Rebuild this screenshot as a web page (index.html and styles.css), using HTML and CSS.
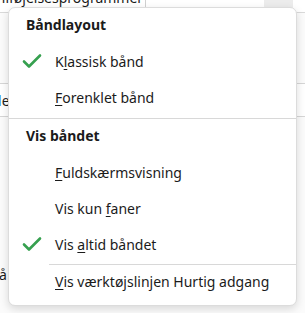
FILE: index.html
```html
<!DOCTYPE html>
<html lang="da">
<head>
<meta charset="utf-8">
<link rel="stylesheet" href="styles.css">
</head>
<body>
<div class="backdrop">
  <div class="topbar">
    <span class="topbar-text">Tilføjelsesprogrammer</span>
    <span class="topbar-divider"></span>
    <span class="topbar-pill"></span>
  </div>
  <div class="side">
    <div class="side-row side-row-a"></div>
    <div class="side-row side-row-b"><span class="side-link">l</span>e</div>
    <div class="side-row side-row-c"></div>
    <div class="side-row side-row-d">å</div>
  </div>
</div>

<div class="menu">
  <div class="menu-header">Båndlayout</div>
  <div class="menu-item checked">
    <svg class="check" viewBox="0 0 20 16" width="20" height="16"><path d="M2 8.5 L7 13.5 L18 2.5" fill="none" stroke="#36a04f" stroke-width="2.6" stroke-linecap="round" stroke-linejoin="round"/></svg>
    <span>K<u>l</u>assisk bånd</span>
  </div>
  <div class="menu-item"><span><u>F</u>orenklet bånd</span></div>
  <div class="menu-sep"></div>
  <div class="menu-header">Vis båndet</div>
  <div class="menu-item"><span><u>F</u>uldskærmsvisning</span></div>
  <div class="menu-item"><span>Vis kun <u>f</u>aner</span></div>
  <div class="menu-item checked">
    <svg class="check" viewBox="0 0 20 16" width="20" height="16"><path d="M2 8.5 L7 13.5 L18 2.5" fill="none" stroke="#36a04f" stroke-width="2.6" stroke-linecap="round" stroke-linejoin="round"/></svg>
    <span>Vis <u>a</u>ltid båndet</span>
  </div>
  <div class="menu-sep inset"></div>
  <div class="menu-item last"><span><u>V</u>is værktøjslinjen Hurtig adgang</span></div>
</div>
</body>
</html>
```

FILE: styles.css
```css
html, body {
  margin: 0;
  padding: 0;
}
body {
  width: 305px;
  height: 313px;
  overflow: hidden;
  background: #ffffff;
  font-family: "Noto Sans", "Open Sans", sans-serif;
  color: #1b1b1b;
  position: relative;
}

/* background application behind the popup */
.backdrop {
  display: flex;
  flex-direction: column;
  height: 313px;
}
.topbar {
  height: 12px;
  border-bottom: 1px solid #d9d9d9;
  display: flex;
  align-items: flex-start;
  position: relative;
  overflow: hidden;
}
.topbar-text {
  font-size: 14px;
  line-height: 14px;
  margin-top: -9px;
  margin-left: -6px;
  width: 151px;
  color: #1b1b1b;
  white-space: nowrap;
}
.topbar-divider {
  width: 1px;
  height: 8px;
  background: #d0d0d0;
}
.topbar-pill {
  width: 29px;
  height: 15px;
  margin-left: 118px;
  margin-top: -4px;
  background: #ececec;
  border-radius: 5px;
}
.side {
  display: flex;
  flex-direction: column;
  flex: 1;
  background: #fbfbfb;
}
.side-row {
  font-size: 14px;
  line-height: 16px;
  overflow: hidden;
  white-space: nowrap;
}
.side-row-a {
  height: 70px;
  border-bottom: 1px solid #d6d6d6;
}
.side-row-b {
  height: 33px;
  padding-top: 9px;
  box-sizing: border-box;
  border-bottom: 1px solid #d6d6d6;
  background: #fff;
  text-indent: -2px;
}
.side-link {
  color: #1f6fd1;
}
.side-row-c {
  height: 150px;
}
.side-row-d {
  height: 20px;
  text-indent: -1px;
}

/* popup menu */
.menu {
  position: absolute;
  left: 8px;
  top: 7px;
  width: 289px;
  height: 299px;
  box-sizing: border-box;
  background: #ffffff;
  border: 1px solid #dcdcdc;
  border-radius: 7px;
  box-shadow: 0 3px 8px rgba(0, 0, 0, 0.14);
  display: flex;
  flex-direction: column;
  font-size: 14px;
}
.menu-header {
  font-weight: 700;
  line-height: 33px;
  padding-left: 17px;
  margin-bottom: 3px;
  color: #1b1b1b;
}
.menu-item {
  height: 36px;
  line-height: 36px;
  padding-left: 46px;
  position: relative;
  white-space: nowrap;
}
.menu-item.last {
  height: 33px;
  line-height: 33px;
}
.menu-item u {
  text-decoration-thickness: 1px;
  text-underline-offset: 2px;
}
.check {
  position: absolute;
  left: 13px;
  top: 9px;
}
.menu-sep {
  height: 1px;
  background: #d8d8d8;
  margin: 2px 0 0 0;
}
.menu-sep.inset {
  margin: 1px 0 0 40px;
}
```
